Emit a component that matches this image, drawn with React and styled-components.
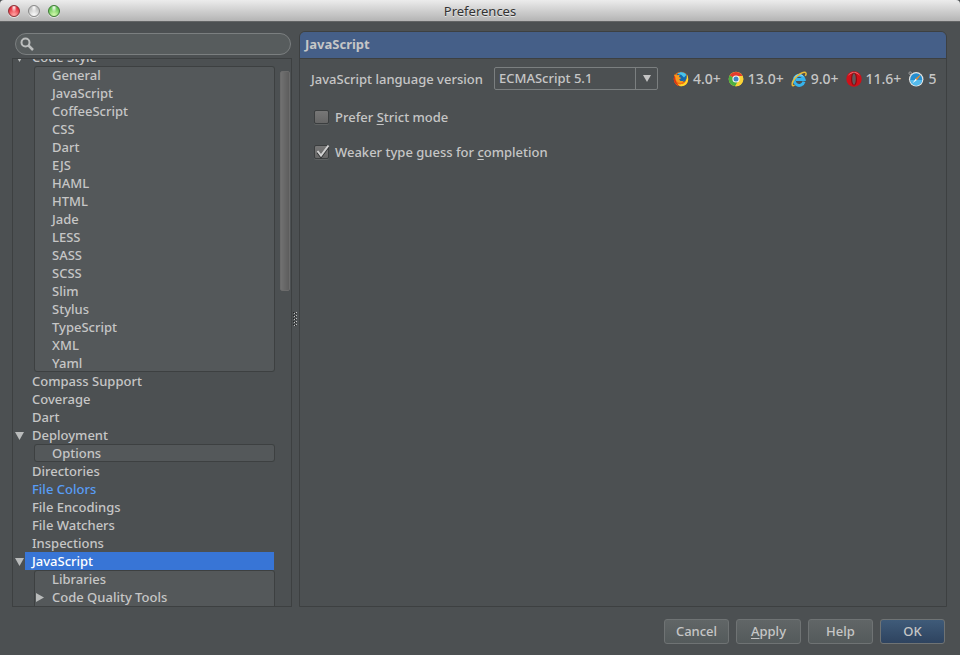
import React, { useState } from "react";
import styled, { createGlobalStyle, css } from "styled-components";

const GlobalStyle = createGlobalStyle`
  *, *::before, *::after { box-sizing: border-box; }
  body {
    margin: 0;
    background: #4c5052;
    color: #c6c6c6;
    font: 500 13px/18px "Noto Sans", "Open Sans", sans-serif;
  }
  button, input, select { font: inherit; color: inherit; }
`;

const Window = styled.div`
  display: flex;
  flex-direction: column;
  height: 100vh;
  overflow: hidden;
`;

const TitleBar = styled.header`
  flex: none;
  display: grid;
  grid-template-columns: 1fr auto 1fr;
  align-items: center;
  height: 22px;
  padding: 0 8px;
  background: linear-gradient(#ececec, #b4b4b4);
  border-bottom: 1px solid #626465;
  border-radius: 4px 4px 0 0;
  color: #333;
`;

const Title = styled.h1`
  margin: 0;
  font-size: 13px;
  font-weight: 400;
  line-height: 20px;
  text-shadow: 0 1px 0 #e8e8e8;
`;

const Lights = styled.div`
  display: flex;
  gap: 8px;
`;

const lightTones = {
  close: ["#ff9b9b", "#e02432", "#8d3035"],
  idle: ["#f5f5f5", "#bdbdbd", "#898989"],
  zoom: ["#c9f5a5", "#5fc24f", "#3c7b33"],
};

const Light = styled.button`
  width: 12px;
  height: 12px;
  padding: 0;
  border: 1px solid ${(p) => lightTones[p.$tone][2]};
  border-radius: 50%;
  background:
    radial-gradient(ellipse at 50% 15%, #fff 0, transparent 40%),
    radial-gradient(circle at 50% 90%, ${(p) => lightTones[p.$tone][0]} 10%, ${(p) => lightTones[p.$tone][1]} 75%);
  box-shadow: 0 1px 0 #e4e4e4;
`;

const Body = styled.div`
  flex: 1;
  min-height: 0;
  display: grid;
  grid-template-columns: 280px 7px minmax(0, 1fr);
  padding: 9px 13px 0 12px;
`;

const Sidebar = styled.nav`
  display: flex;
  flex-direction: column;
  gap: 3px;
  min-height: 0;
  padding-top: 2px;
`;

const SearchField = styled.label`
  flex: none;
  display: flex;
  align-items: center;
  gap: 4px;
  height: 22px;
  margin: 0 1px 0 3px;
  padding: 0 4px;
  border: 1px solid #7b7f80;
  border-radius: 11px;
  background: #575c5d;
`;

const SearchInput = styled.input.attrs({ type: "search" })`
  flex: 1;
  min-width: 0;
  padding: 0;
  border: 0;
  outline: 0;
  background: transparent;
`;

const TreeFrame = styled.div`
  flex: 1;
  min-height: 0;
  display: flex;
  border: 1px solid #3d4041;
  overflow: hidden;
`;

const TreeList = styled.ul`
  flex: 1;
  margin: -11px 0 0;
  padding: 0;
  list-style: none;
`;

const SubList = styled.ul`
  margin: 0 -1px 0 21px;
  padding: 0;
  list-style: none;
  border-radius: 3px;
  background: #54585a;
  box-shadow: inset 0 0 0 1px #3d4041;
`;

const TreeItem = styled.li`
  &:last-child > ${SubList} { padding-bottom: 8px; }
`;

const TreeRow = styled.div`
  display: flex;
  height: 18px;
  color: ${(p) => (p.$modified ? "#589df6" : "inherit")};
  ${(p) => p.$selected && css`color: #fff;`}
`;

const Toggle = styled.button`
  display: flex;
  align-items: center;
  justify-content: center;
  width: ${(p) => (p.$nested ? "11px" : "12px")};
  padding: 0;
  border: 0;
  background: none;
  color: #b9bbbb;
`;

const ToggleSpace = styled.span`
  width: ${(p) => (p.$nested ? "11px" : "12px")};
`;

const RowLink = styled.a`
  flex: 1;
  padding-left: 7px;
  color: inherit;
  text-decoration: none;
  white-space: nowrap;
  background: ${(p) => (p.$selected ? "#3875d6" : "none")};
`;

const ScrollTrack = styled.div`
  flex: none;
  width: 17px;
  padding: 12px 1px 0 6px;
`;

const ScrollThumb = styled.div`
  height: 220px;
  border: 1px solid #6b6b6b;
  border-radius: 2px;
  background: linear-gradient(90deg, #717171, #5d5d5d);
`;

const Splitter = styled.div`
  display: flex;
  align-items: center;
  justify-content: center;
  cursor: col-resize;
`;

const Panel = styled.main`
  min-width: 0;
  display: flex;
  flex-direction: column;
  border: 1px solid #3d4041;
  border-radius: 6px 6px 0 0;
  overflow: hidden;
`;

const PanelTitle = styled.h2`
  margin: 0;
  padding: 3px 5px 5px;
  border-bottom: 1px solid #3d4041;
  background: #455f88;
  font-size: 13px;
  font-weight: 700;
  line-height: 18px;
`;

const Form = styled.form`
  display: flex;
  flex-direction: column;
  padding: 8px 10px 0 11px;
`;

const VersionRow = styled.div`
  display: flex;
  align-items: center;
  min-width: 0;
  height: 23px;
  margin-bottom: 18px;
`;

const FieldLabel = styled.label`
  flex: none;
  width: 183px;
  white-space: nowrap;
`;

const SelectBox = styled.div`
  position: relative;
  flex: none;
  width: 164px;
  height: 23px;
`;

const Select = styled.select`
  appearance: none;
  width: 100%;
  height: 100%;
  padding: 0 26px 2px 4px;
  border: 1px solid #7b7f80;
  border-radius: 2px;
  background: #4c5052;
`;

const SelectArrow = styled.span`
  position: absolute;
  top: 1px;
  right: 1px;
  bottom: 1px;
  width: 22px;
  display: grid;
  place-items: center;
  border-left: 1px solid #7b7f80;
  pointer-events: none;
`;

const Browsers = styled.ul`
  flex: 1;
  min-width: 0;
  display: flex;
  gap: 7px;
  margin: 0;
  padding: 0 0 0 15px;
  list-style: none;
  overflow: hidden;
  font-size: 14px;
`;

const Browser = styled.li`
  flex: none;
  display: flex;
  align-items: center;
  gap: 4px;
`;

const CheckLabel = styled.label`
  display: flex;
  align-items: center;
  gap: 5px;
  height: 18px;
  margin: 0 0 17px 3px;
`;

const CheckBox = styled.span`
  display: grid;
  width: 16px;
  height: 16px;
  > * { grid-area: 1 / 1; }
  > svg { pointer-events: none; visibility: hidden; }
  > input:checked + svg { visibility: visible; }
`;

const CheckInput = styled.input.attrs({ type: "checkbox" })`
  appearance: none;
  width: 15px;
  height: 14px;
  margin: 1px 0;
  border: 1px solid #3b3e3f;
  border-radius: 2px;
  background: linear-gradient(#777, #666);
  box-shadow: 0 1px 0 #5f6263;
`;

const Footer = styled.footer`
  flex: none;
  display: flex;
  justify-content: flex-end;
  gap: 7px;
  padding: 12px 15px 11px;
`;

const Button = styled.button`
  width: 65px;
  height: 25px;
  padding: 0 0 2px;
  border: 1px solid #6f7374;
  border-radius: 3px;
  background: ${(p) => (p.$primary ? "linear-gradient(#3f5b79, #2e435f)" : "linear-gradient(#616667, #545a5b)")};
`;

const Mnemonic = styled.u`
  text-underline-offset: 2px;
`;

const Arrow = ({ open }) => (
  <svg width="9" height="9" viewBox="0 0 9 9" fill="currentColor" aria-hidden="true">
    <path d={open ? "M0 1H9L4.500 9Z" : "M1 0 9 4.500 1 9Z"} />
  </svg>
);

const Firefox = () => (
  <svg width="16" height="16" viewBox="0 0 16 16" aria-hidden="true">
    <circle cx="8" cy="8" r="7.300" fill="#f4700f" />
    <path d="M14 3.500C16.500 8 15 15 8.500 15.300 5 15.300 3 13.500 2.500 12 6 14.500 12.500 14 13.200 8.500Z" fill="#ffd92b" />
    <path d="M4 3.500C5.500.5 11 .3 13.300 3.600 14.300 6 13.600 9.500 11.300 10.700 7.500 11.500 4.800 9.500 4 3.500Z" fill="#1768a9" />
    <path d="M4.500 2.800C7 .5 11.800.8 13.300 4L11 6.500 8.500 4Z" fill="#48c4ec" />
    <path d="M1.300 3.500 3.800 4.300 6.800 3.800 6 6 8.300 7 6.300 8.300C6.500 10.200 8.500 10.700 10.800 9.400 9.500 12.500 5 12.600 3.200 9.500L1 7Z" fill="#f99a1c" />
    <path d="M1.300 4.500C-.3 9 2 14.600 7 15.300 3.800 13 2 10 2.300 6Z" fill="#d93416" />
  </svg>
);

const Chrome = () => (
  <svg width="16" height="16" viewBox="0 0 16 16" aria-hidden="true">
    <circle cx="8" cy="8" r="7.300" fill="#fbd337" />
    <path d="M8 8 1.600 4.500A7.300 7.300 0 0 1 14.400 5Z" fill="#e23b2e" />
    <path d="M8 8 1.600 4.500A7.300 7.300 0 0 0 7.200 15.300L10 10Z" fill="#4cae43" />
    <path d="M8 5H14.600A7.300 7.300 0 0 1 7.200 15.300L10.400 10Z" fill="#fbd337" />
    <circle cx="8" cy="8" r="3.600" fill="#f5f5f5" />
    <circle cx="8" cy="8" r="2.500" fill="#3d82c4" />
  </svg>
);

const Explorer = () => (
  <svg width="16" height="16" viewBox="0 0 16 16" fill="none" aria-hidden="true">
    <path d="M13 10.700A5 5 0 1 1 13.100 8.500H5" stroke="#35b3ed" strokeWidth="3" />
    <path d="M3.500 6.500C5 3.500 10 2.700 12.300 5.500" stroke="#a9e2fa" strokeWidth="1" />
    <path d="M3.500 14C.5 16.500.5 12 3 8.500 6 4 12 .2 14.500 1.500 15.500 2.200 15 3.700 14.300 4.800" stroke="#e9bb39" strokeWidth="1.500" />
  </svg>
);

const Opera = () => (
  <svg width="16" height="16" viewBox="0 0 16 16" aria-hidden="true">
    <ellipse cx="8" cy="8" rx="7.700" ry="7.700" fill="#cf1019" />
    <path d="M2 5C4-.5 12-.5 14 5 11 1 5 1 2 5Z" fill="#f4757b" />
    <ellipse cx="8" cy="8" rx="3" ry="6.600" fill="#8a0a11" />
    <ellipse cx="8" cy="8" rx="1.800" ry="5.700" fill="#62595a" />
  </svg>
);

const Safari = () => (
  <svg width="16" height="16" viewBox="0 0 16 16" aria-hidden="true">
    <circle cx="2.200" cy="2.200" r="1.300" fill="none" stroke="#999" />
    <circle cx="8.200" cy="8.300" r="7.200" fill="#e3e5e5" />
    <circle cx="8.200" cy="8.300" r="6" fill="#258ed0" />
    <path d="M2.500 9A5.700 5.700 0 0 0 13.900 9Z" fill="#54bbed" />
    <path d="M12.200 4.200 8.800 8.900 7.600 7.700Z" fill="#f18a28" stroke="#f18a28" strokeWidth=".5" />
    <path d="M4.500 12.300 7.600 7.700 8.800 8.900Z" fill="#fff" />
  </svg>
);

const browsers = [
  ["Firefox", "4.0+", Firefox],
  ["Chrome", "13.0+", Chrome],
  ["Internet Explorer", "9.0+", Explorer],
  ["Opera", "11.6+", Opera],
  ["Safari", "5", Safari],
];

const leaf = (name) => ({ name });

const tree = [
  {
    name: "Code Style",
    open: true,
    children: [
      "General", "JavaScript", "CoffeeScript", "CSS", "Dart", "EJS", "HAML", "HTML", "Jade",
      "LESS", "SASS", "SCSS", "Slim", "Stylus", "TypeScript", "XML", "Yaml",
    ].map(leaf),
  },
  leaf("Compass Support"),
  leaf("Coverage"),
  leaf("Dart"),
  { name: "Deployment", open: true, children: [leaf("Options")] },
  leaf("Directories"),
  { name: "File Colors", modified: true },
  leaf("File Encodings"),
  leaf("File Watchers"),
  leaf("Inspections"),
  {
    name: "JavaScript",
    selected: true,
    open: true,
    children: [leaf("Libraries"), { name: "Code Quality Tools", children: [] }],
  },
];

function Node({ node, nested }) {
  const [open, setOpen] = useState(Boolean(node.open));
  return (
    <TreeItem>
      <TreeRow $selected={node.selected} $modified={node.modified}>
        {node.children ? (
          <Toggle $nested={nested} aria-label={`Toggle ${node.name}`} aria-expanded={open} onClick={() => setOpen(!open)}>
            <Arrow open={open} />
          </Toggle>
        ) : (
          <ToggleSpace $nested={nested} />
        )}
        <RowLink href="#" $selected={node.selected} aria-current={node.selected ? "page" : undefined}>
          {node.name}
        </RowLink>
      </TreeRow>
      {open && node.children.length > 0 && (
        <SubList>
          {node.children.map((child) => <Node key={child.name} node={child} nested />)}
        </SubList>
      )}
    </TreeItem>
  );
}

function Check({ checked, children }) {
  return (
    <CheckLabel>
      <CheckBox>
        <CheckInput defaultChecked={checked} />
        <svg width="16" height="16" viewBox="0 0 16 16" fill="none" aria-hidden="true">
          <path d="M3.500 8.500 7 13 14.500 3" stroke="#303233" strokeWidth="2" />
          <path d="M3.500 7 7 11.500 14.500 1.500" stroke="#d0d0d0" strokeWidth="2" />
        </svg>
      </CheckBox>
      <span>{children}</span>
    </CheckLabel>
  );
}

export default function App() {
  return (
    <Window>
      <GlobalStyle />
      <TitleBar>
        <Lights>
          <Light $tone="close" aria-label="Close" />
          <Light $tone="idle" aria-label="Minimize" />
          <Light $tone="zoom" aria-label="Zoom" />
        </Lights>
        <Title>Preferences</Title>
      </TitleBar>
      <Body>
        <Sidebar aria-label="Settings">
          <SearchField>
            <svg width="14" height="14" viewBox="0 0 14 14" fill="none" stroke="#bcbebe" aria-hidden="true">
              <circle cx="5.500" cy="5.500" r="4" strokeWidth="2" />
              <path d="M8.500 8.500 13 13" strokeWidth="2.500" />
            </svg>
            <SearchInput aria-label="Search settings" />
          </SearchField>
          <TreeFrame>
            <TreeList>
              {tree.map((node) => <Node key={node.name} node={node} />)}
            </TreeList>
            <ScrollTrack>
              <ScrollThumb />
            </ScrollTrack>
          </TreeFrame>
        </Sidebar>
        <Splitter>
          <svg width="5" height="15" viewBox="0 0 5 15" aria-hidden="true">
            {[0, 3, 6, 9, 12].map((y) => (
              <g key={y}>
                <path d={`M0 ${y}h1v1h-1zM2 ${y + 1}h1v1h-1z`} fill="#222" />
                <path d={`M1 ${y + 1}h1v1h-1zM3 ${y}h1v1h-1z`} fill="#c4c4c4" />
              </g>
            ))}
          </svg>
        </Splitter>
        <Panel>
          <PanelTitle>JavaScript</PanelTitle>
          <Form onSubmit={(e) => e.preventDefault()}>
            <VersionRow>
              <FieldLabel htmlFor="language-version">JavaScript language version</FieldLabel>
              <SelectBox>
                <Select id="language-version" defaultValue="ECMAScript 5.1">
                  <option>ECMAScript 5.1</option>
                </Select>
                <SelectArrow>
                  <svg width="8" height="7" viewBox="0 0 8 7" aria-hidden="true">
                    <path d="M0 0H8L4 7Z" fill="#c4c4c4" />
                  </svg>
                </SelectArrow>
              </SelectBox>
              <Browsers>
                {browsers.map(([name, version, Icon]) => (
                  <Browser key={name} title={name}>
                    <Icon />
                    {version}
                  </Browser>
                ))}
              </Browsers>
            </VersionRow>
            <Check>Prefer <Mnemonic>S</Mnemonic>trict mode</Check>
            <Check checked>Weaker type guess for <Mnemonic>c</Mnemonic>ompletion</Check>
          </Form>
        </Panel>
      </Body>
      <Footer>
        <Button>Cancel</Button>
        <Button><Mnemonic>A</Mnemonic>pply</Button>
        <Button>Help</Button>
        <Button $primary>OK</Button>
      </Footer>
    </Window>
  );
}
